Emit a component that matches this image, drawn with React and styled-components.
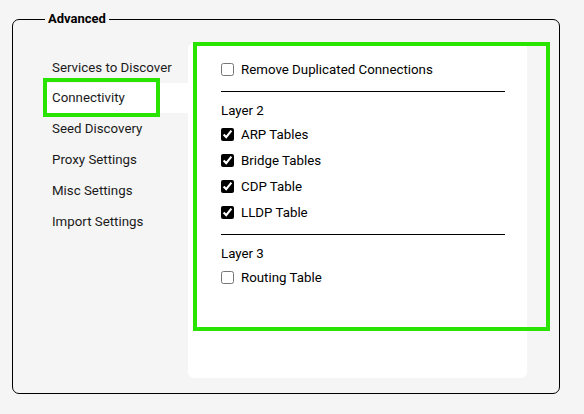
import React from 'react'
import styled, { createGlobalStyle } from 'styled-components'

const GlobalStyle = createGlobalStyle`
	html, body {
		margin: 0;
		padding: 0;
		background: #f5f5f5;
		font-family: Roboto, 'Noto Sans', sans-serif;
	}
`

const navItems = [
	'Services to Discover',
	'Connectivity',
	'Seed Discovery',
	'Proxy Settings',
	'Misc Settings',
	'Import Settings',
]

const layer2 = ['ARP Tables', 'Bridge Tables', 'CDP Table', 'LLDP Table']

const App = () => {
	return (
		<Page>
			<GlobalStyle />
			<Fieldset>
				<Legend>Advanced</Legend>
				<Body>
					<Nav>
						{navItems.map((item) => (
							<NavItem key={item} active={item === 'Connectivity'}>
								{item}
							</NavItem>
						))}
					</Nav>
					<Panel>
						<Row>
							<Check type='checkbox' />
							Remove Duplicated Connections
						</Row>
						<Rule />
						<LayerTitle>Layer 2</LayerTitle>
						{layer2.map((item) => (
							<Row key={item}>
								<Check type='checkbox' defaultChecked />
								{item}
							</Row>
						))}
						<Rule />
						<LayerTitle>Layer 3</LayerTitle>
						<Row>
							<Check type='checkbox' />
							Routing Table
						</Row>
					</Panel>
				</Body>
			</Fieldset>
			<Highlight style={{ left: 43, top: 78, width: 117, height: 39 }} />
			<Highlight style={{ left: 193, top: 42, width: 357, height: 289 }} />
		</Page>
	)
}

const Page = styled.div`
	position: relative;
	width: 584px;
	height: 414px;
	padding: 11px 24px 0 12px;
	box-sizing: border-box;
`

const Fieldset = styled.fieldset`
	margin: 0;
	width: 548px;
	height: 383px;
	box-sizing: border-box;
	border: 1px solid #000;
	border-radius: 7px;
	padding: 16px 32px 15px 32px;
`

const Legend = styled.legend`
	padding: 0 3px;
	font-size: 13px;
	font-weight: 700;
	line-height: 16px;
	color: #000;
`

const Body = styled.div`
	display: flex;
	height: 100%;
`

const Nav = styled.div`
	width: 143px;
	display: flex;
	flex-direction: column;
	gap: 1px;
	padding-top: 10px;
`

const NavItem = styled.div`
	height: 30px;
	line-height: 30px;
	padding-left: 7px;
	font-size: 13.3px;
	color: #1a1a1a;
	background: ${(p) => (p.active ? '#fff' : 'transparent')};
	white-space: nowrap;
	margin-top: ${(p) => (p.active ? '-1px' : '0')};
`

const Panel = styled.div`
	flex: 1;
	background: #fff;
	border-radius: 6px;
	padding: 13px 22px 0 33px;
	display: flex;
	flex-direction: column;
`

const Row = styled.label`
	display: flex;
	align-items: center;
	gap: 7px;
	height: 26px;
	font-size: 13.3px;
	color: #000;
`

const Check = styled.input`
	margin: 0;
	width: 13px;
	height: 13px;
	accent-color: #000;
`

const Rule = styled.div`
	height: 1px;
	background: #000;
	margin: 9px 0 8px;
`

const LayerTitle = styled.div`
	font-size: 13.3px;
	line-height: 20px;
	padding-top: 1px;
	color: #000;
`

const Highlight = styled.div`
	position: absolute;
	border: 4px solid #28e400;
	box-sizing: border-box;
	pointer-events: none;
`

export default App
